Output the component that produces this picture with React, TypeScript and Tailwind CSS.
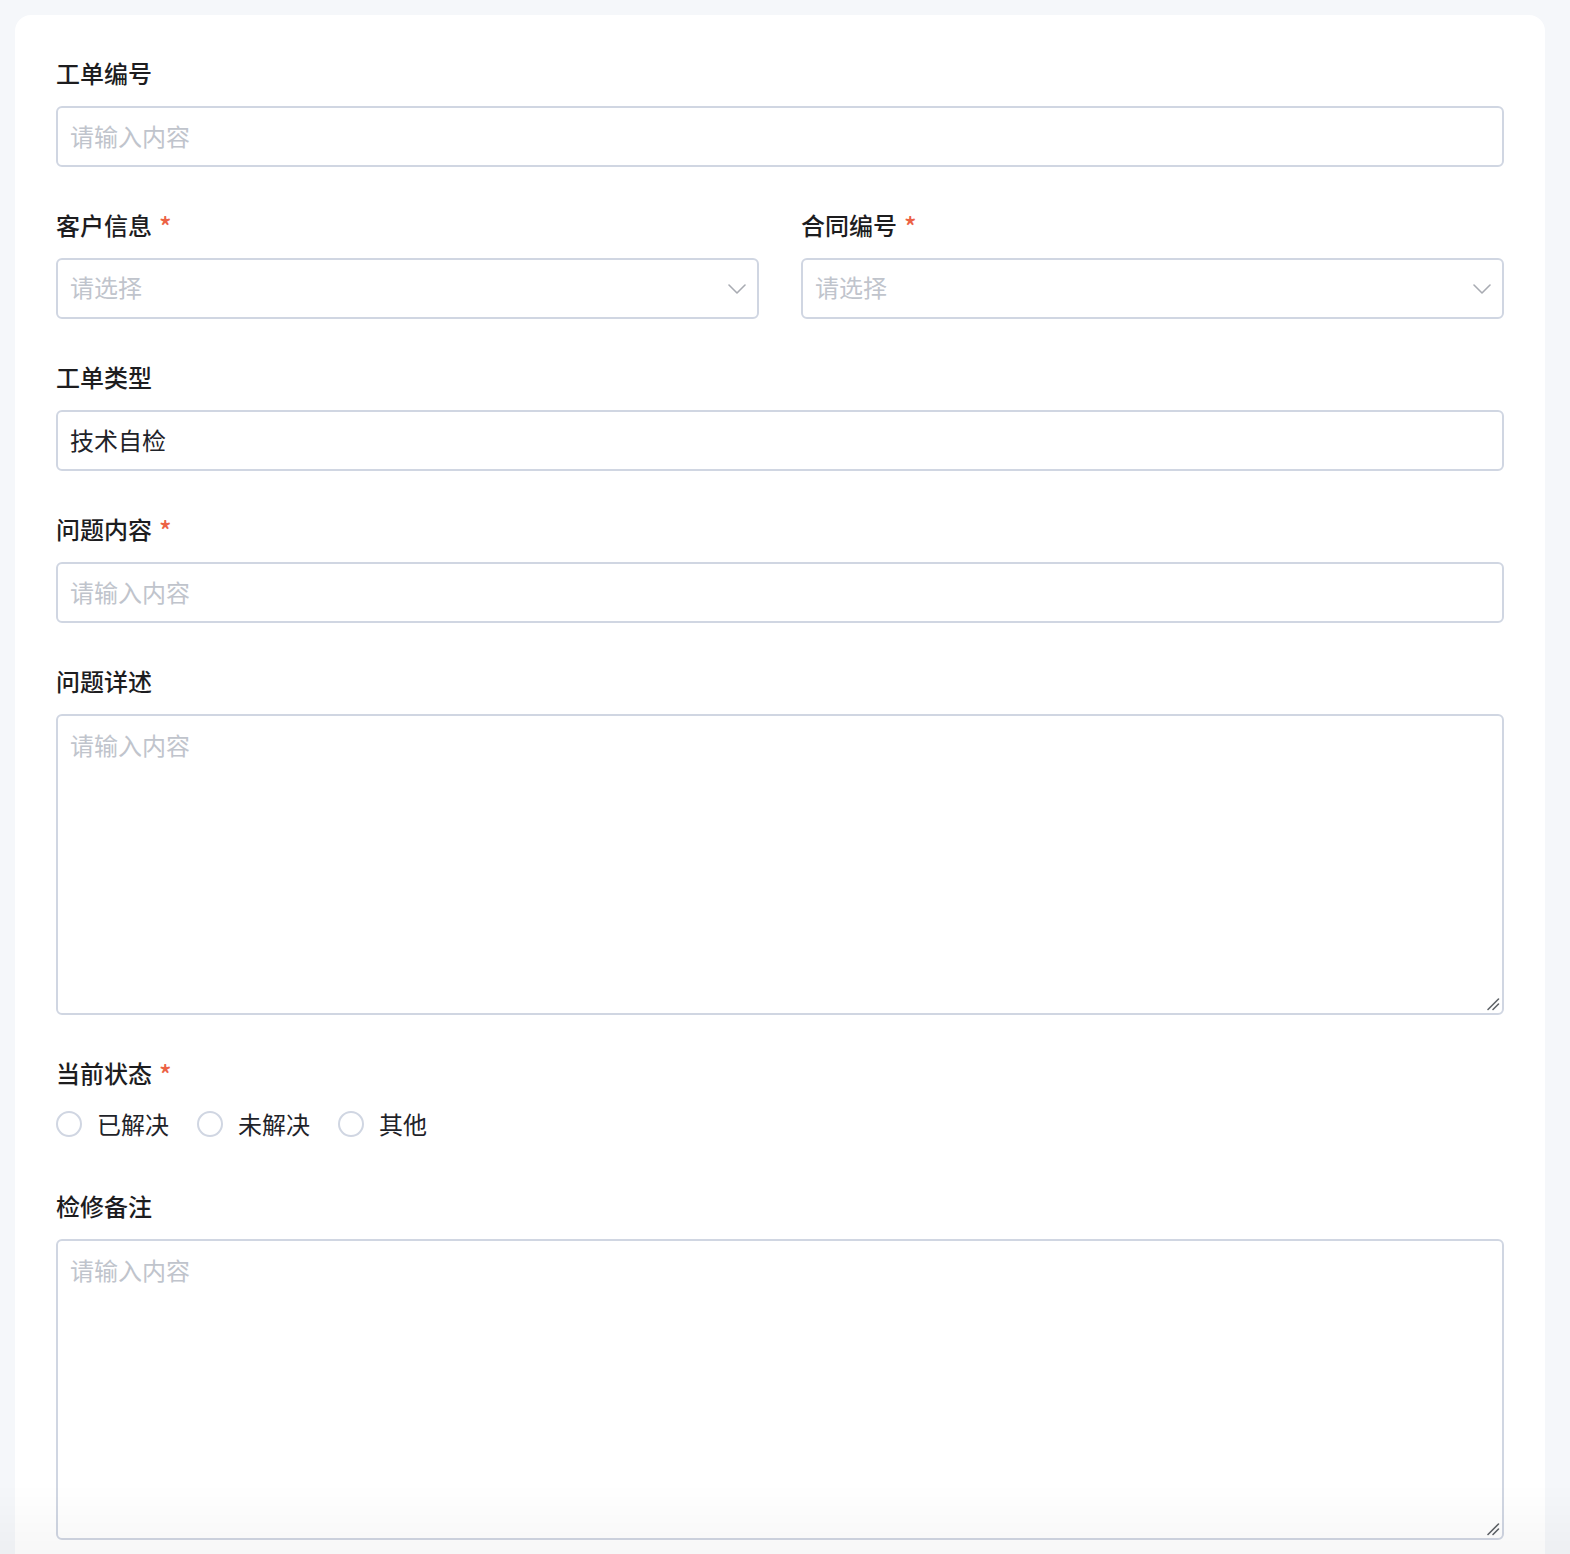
import React from "react";

const FONT = { fontFamily: '"Noto Sans CJK SC", "Noto Sans", sans-serif' };

function Label({ text, required }: { text: string; required?: boolean }) {
  return (
    <div className="flex h-[36px] items-center text-[24px] leading-[36px] font-medium text-[#1d1d1f]">
      <span>{text}</span>
      {required && <span className="ml-[7px] mt-[2px] text-[26px] leading-[30px] text-[#ec6245]">*</span>}
    </div>
  );
}

function TextInput({ placeholder, value }: { placeholder?: string; value?: string }) {
  return (
    <input
      className="block h-[61px] w-full rounded-[6px] border-2 border-[#d0d6e2] bg-white px-[12px] pb-[2px] text-[24px] text-[#1f2329] outline-none placeholder:text-[#c0c4cc]"
      placeholder={placeholder}
      defaultValue={value}
      style={FONT}
    />
  );
}

function Chevron() {
  return (
    <svg width="18" height="10" viewBox="0 0 18 10" fill="none" className="shrink-0">
      <path d="M1 1 L9 9 L17 1" stroke="#a8abb2" strokeWidth="1.6" strokeLinecap="round" strokeLinejoin="round" />
    </svg>
  );
}

function Select({ placeholder }: { placeholder: string }) {
  return (
    <div className="flex h-[61px] w-full items-center justify-between rounded-[6px] border-2 border-[#d0d6e2] bg-white pl-[12px] pr-[11px]">
      <span className="pb-[4px] text-[24px] text-[#c0c4cc]">{placeholder}</span>
      <Chevron />
    </div>
  );
}

// Resize grip drawn in the bottom-right corner of a textarea
function Grip() {
  return (
    <svg
      width="14"
      height="14"
      viewBox="0 0 14 14"
      className="pointer-events-none absolute bottom-[4px] right-[4px]"
    >
      <path d="M2 12.5 L12.5 2" stroke="#5f6368" strokeWidth="1.6" strokeLinecap="round" />
      <path d="M7 12.5 L12.5 7" stroke="#5f6368" strokeWidth="1.6" strokeLinecap="round" />
    </svg>
  );
}

function TextArea({ placeholder }: { placeholder: string }) {
  return (
    <div className="relative">
      <textarea
        className="block h-[301px] w-full resize-none rounded-[6px] border-2 border-[#d0d6e2] bg-white px-[12px] py-[12px] text-[24px] leading-[34px] text-[#1f2329] outline-none placeholder:text-[#c0c4cc]"
        placeholder={placeholder}
        style={FONT}
      />
      <Grip />
    </div>
  );
}

function Radio({ label }: { label: string }) {
  return (
    <label className="flex items-center">
      <span className="h-[26px] w-[26px] rounded-full border-2 border-[#d0d6e2] bg-white" />
      <span className="ml-[15px] text-[24px] text-[#1f2329]">{label}</span>
    </label>
  );
}

export default function App() {
  return (
    <div className="min-h-screen bg-[#f5f7fa] pt-[15px]" style={FONT}>
      <div className="ml-[15px] mr-[25px] rounded-[16px] bg-white px-[41px] pt-[40px] pb-[40px]">
        {/* 工单编号 */}
        <div className="mb-[40px]">
          <Label text="工单编号" />
          <div className="mt-[15px]">
            <TextInput placeholder="请输入内容" />
          </div>
        </div>

        {/* 客户信息 / 合同编号 */}
        <div className="mb-[40px] grid grid-cols-2 gap-x-[42px]">
          <div>
            <Label text="客户信息" required />
            <div className="mt-[15px]">
              <Select placeholder="请选择" />
            </div>
          </div>
          <div>
            <Label text="合同编号" required />
            <div className="mt-[15px]">
              <Select placeholder="请选择" />
            </div>
          </div>
        </div>

        {/* 工单类型 */}
        <div className="mb-[40px]">
          <Label text="工单类型" />
          <div className="mt-[15px]">
            <TextInput value="技术自检" />
          </div>
        </div>

        {/* 问题内容 */}
        <div className="mb-[40px]">
          <Label text="问题内容" required />
          <div className="mt-[15px]">
            <TextInput placeholder="请输入内容" />
          </div>
        </div>

        {/* 问题详述 */}
        <div className="mb-[40px]">
          <Label text="问题详述" />
          <div className="mt-[15px]">
            <TextArea placeholder="请输入内容" />
          </div>
        </div>

        {/* 当前状态 */}
        <div className="mb-[46px]">
          <Label text="当前状态" required />
          <div className="mt-[15px] flex h-[36px] items-center gap-x-[28px]">
            <Radio label="已解决" />
            <Radio label="未解决" />
            <Radio label="其他" />
          </div>
        </div>

        {/* 检修备注 */}
        <div>
          <Label text="检修备注" />
          <div className="mt-[15px]">
            <TextArea placeholder="请输入内容" />
          </div>
        </div>
      </div>

      {/* bottom fade over the scrolling card */}
      <div className="pointer-events-none fixed inset-x-0 bottom-0 h-[70px] bg-gradient-to-b from-transparent to-[rgba(0,0,0,0.03)]" />
    </div>
  );
}
